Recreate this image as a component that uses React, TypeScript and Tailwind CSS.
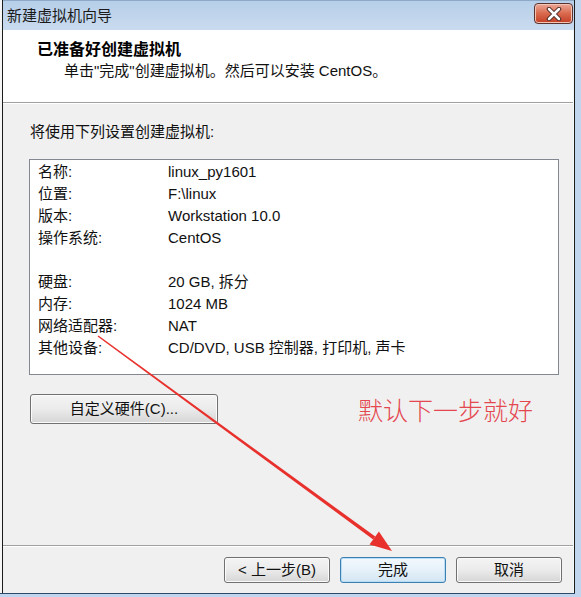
import { ReactNode } from "react";

const rows: [string, string][] = [
  ["名称:", "linux_py1601"],
  ["位置:", "F:\\linux"],
  ["版本:", "Workstation 10.0"],
  ["操作系统:", "CentOS"],
  ["", ""],
  ["硬盘:", "20 GB, 拆分"],
  ["内存:", "1024 MB"],
  ["网络适配器:", "NAT"],
  ["其他设备:", "CD/DVD, USB 控制器, 打印机, 声卡"],
];

function WinButton({
  children,
  primary = false,
  className = "",
}: {
  children: ReactNode;
  primary?: boolean;
  className?: string;
}) {
  const look = primary
    ? "border-[#3c7fb1] bg-linear-to-b from-[#f3f9fd] via-[#e6f1fa] to-[#d3e6f4] shadow-[inset_0_0_0_1px_#b9ddf5]"
    : "border-[#707070] bg-linear-to-b from-[#f4f4f4] via-[#ebebeb] to-[#d6d6d6] shadow-[inset_0_0_0_1px_#fbfbfb]";
  return (
    <button
      className={`flex items-center justify-center rounded-[3px] border text-[15px] text-[#111] ${look} ${className}`}
    >
      {children}
    </button>
  );
}

export default function App() {
  return (
    <div className="relative w-[581px] h-[597px] overflow-hidden bg-[#c1d6ee] font-['Liberation_Sans','Noto_Sans_CJK_SC',sans-serif]">
      {/* window */}
      <div className="w-[575px] h-[594px] flex bg-[#eeeeee] border-b border-[#2f4a68]">
        <div className="w-[2px] bg-[#f6f6f6]" />
        <div className="flex-1 flex flex-col border-l border-r border-[#1c1c1c]">
          {/* title bar */}
          <div className="h-[30px] flex items-center justify-between pl-[4px] pr-[1px] bg-linear-to-b from-[#b7cfe9] to-[#c9dbef] border-t border-[#8ea9c8]">
            <span className="text-[15px] text-[#1b1b1b] leading-none">新建虚拟机向导</span>
            <div className="w-[39px] h-[21px] -mt-[4px] rounded-[4px] border border-[#5a3330] bg-linear-to-b from-[#eaa797] via-[#d9694d] to-[#c23d24] flex items-center justify-center shadow-[inset_0_0_0_1px_#f3c3b4]">
              <svg width="16" height="14" viewBox="0 0 16 14">
                <path d="M3 2 L13 12 M13 2 L3 12" stroke="#4a2a26" strokeWidth="4.5" strokeLinecap="round" />
                <path d="M3 2 L13 12 M13 2 L3 12" stroke="#ffffff" strokeWidth="2.5" strokeLinecap="round" />
              </svg>
            </div>
          </div>

          {/* client */}
          <div className="flex-1 flex flex-col border-r border-[#f4f8fc]">
            {/* header */}
            <div className="h-[72px] bg-white pl-[34px] pt-[8px]">
              <div className="text-[16px] leading-[20px] font-bold text-black font-['Noto_Sans_CJK_SC',sans-serif]">
                已准备好创建虚拟机
              </div>
              <div className="mt-[3px] pl-[27px] text-[15px] leading-[20px] text-[#111]">
                单击"完成"创建虚拟机。然后可以安装 CentOS。
              </div>
            </div>
            <div className="h-px bg-[#a0a0a0]" />
            <div className="h-px bg-white" />

            {/* body */}
            <div className="h-[441px] bg-[#f0f0f0] pt-[18px] pl-[26px]">
              <div className="pl-[1px] text-[15px] leading-[20px] text-[#111]">
                将使用下列设置创建虚拟机:
              </div>
              <div className="mt-[17px] w-[530px] h-[216px] bg-white border border-[#828790] pt-[1px] pl-[8px]">
                {rows.map(([k, v], i) => (
                  <div key={i} className="h-[22px] flex items-center text-[15px] text-[#111]">
                    <span className="w-[130px]">{k}</span>
                    <span>{v}</span>
                  </div>
                ))}
              </div>
              <div className="mt-[19px] flex items-center">
                <WinButton className="ml-[1px] w-[188px] h-[30px]">自定义硬件(C)...</WinButton>
                <span className="ml-[140px] text-[25px] leading-none font-light text-[#e4474f] font-['Noto_Sans_CJK_SC',sans-serif]">
                  默认下一步就好
                </span>
              </div>
            </div>

            <div className="h-px bg-[#a0a0a0]" />
            <div className="h-px bg-white" />

            {/* footer */}
            <div className="flex-1 bg-[#f0f0f0] flex justify-end gap-[10px] pt-[10px] pr-[11px]">
              <WinButton className="w-[106px] h-[26px]">&lt; 上一步(B)</WinButton>
              <WinButton primary className="w-[106px] h-[26px]">完成</WinButton>
              <WinButton className="w-[106px] h-[26px]">取消</WinButton>
            </div>
          </div>
        </div>
      </div>

      {/* annotation arrow */}
      <svg className="absolute left-0 top-0 pointer-events-none" width="581" height="597" viewBox="0 0 581 597">
        <polygon
          points="98.44,335.39 375.23,536.59 373.17,539.41 97.56,336.61"
          fill="#e8302c"
        />
        <polygon points="392,551 369.5,544.5 378.9,531.5" fill="#e8302c" />
      </svg>
    </div>
  );
}
